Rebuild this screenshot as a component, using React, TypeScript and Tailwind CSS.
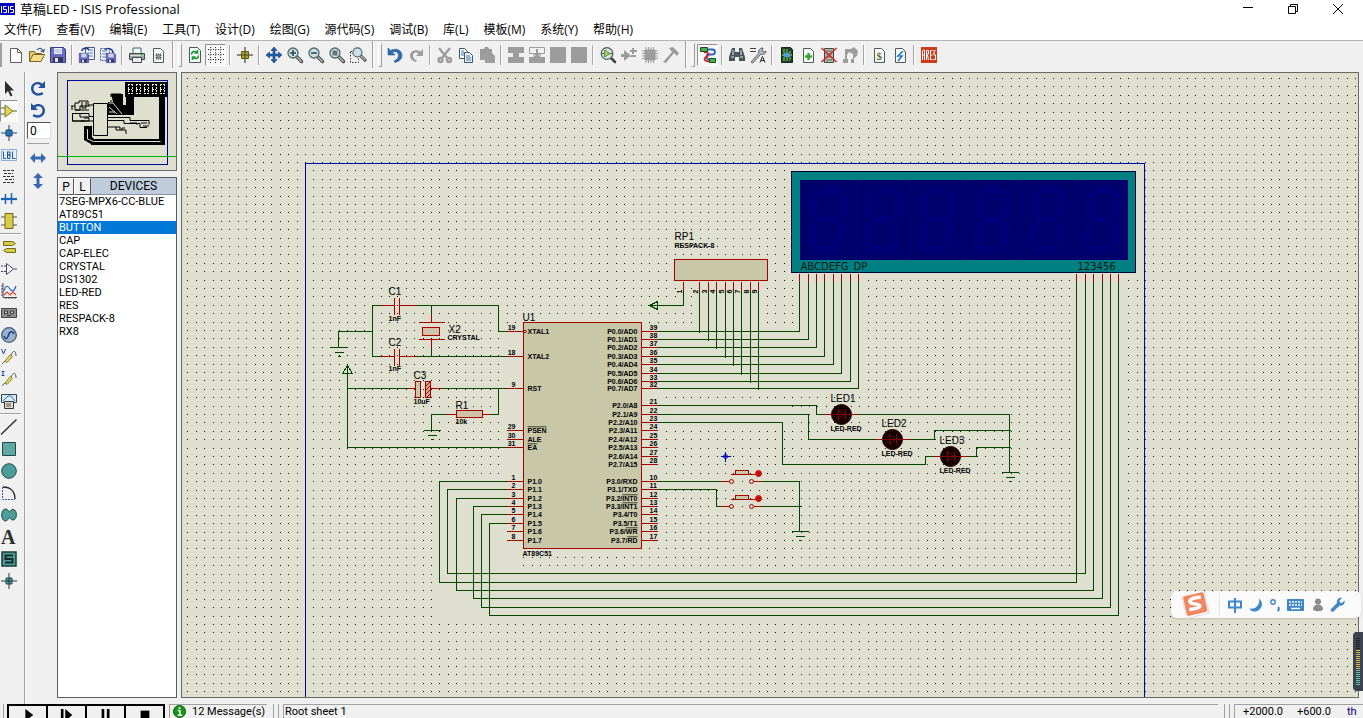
import type { ReactNode } from 'react';

type Tool = { label: string; icon: ReactNode; pressed?: boolean; disabled?: boolean };

const GREY = '#9c9c9c';

const page = (
  <path d="M3.5 1.5h7l3 3v11h-10z" fill="#f6f9f6" stroke="#4c5a5a" />
);

const lens = (
  <>
    <path d="M9.5 9.5l5 5" stroke="#444" strokeWidth="3.4" strokeLinecap="round" />
    <path d="M10 10l4.200 4.200" stroke="#b9b9b9" strokeWidth="1.600" strokeLinecap="round" />
    <circle cx="6" cy="6" r="5" fill="#ccdfe4" stroke="#52666c" strokeWidth="1.300" />
  </>
);

const floppy = (
  <>
    <path d="M.5.500h13l2 2v13h-15z" fill="#6a6cc4" stroke="#3b3b86" />
    <path d="M4 1h8v6H4z" fill="#e8edf8" />
    <path d="M5 3h6M5 5h6" stroke="#9fb0d4" />
    <path d="M3 10h10v5H3z" fill="#33365e" />
    <path d="M5 11h3v4H5z" fill="#e8e8f0" />
  </>
);

const hammerBlock = (
  <path d="M0 0h16v6h-5v4h5v6H0v-6h5V6H0z" fill={GREY} />
);

const chipPins = (
  <path d="M3 3h10v10H3zM4 0v16M6.500 0v16M9 0v16M11.500 0v16M0 4h16M0 6.500h16M0 9h16M0 11.500h16" fill={GREY} stroke={GREY} />
);

const fileTools: Tool[][] = [
  [
    { label: 'New', icon: <path d="M2.500 1.500h7l4 4v10h-11zM9.500 1.500v4h4" fill="#fff" stroke="#5a6060" /> },
    {
      label: 'Open',
      icon: (
        <>
          <path d="M.5 14.500v-10h5l1 2h6v3" fill="#e8c860" stroke="#77652a" />
          <path d="M.5 14.500l3.500-7h11.500l-3.500 7z" fill="#f6dc83" stroke="#77652a" />
          <path d="M8 3c2-2.500 5-2 6 1M15.500 2l-1 3-3-1" fill="none" stroke="#3f5d7c" strokeWidth="1.200" />
        </>
      ),
    },
    { label: 'Save', icon: floppy },
  ],
  [
    {
      label: 'Import section',
      icon: (
        <>
          <path d="M6.500.500h9v12h-9z" fill="#eef2fa" stroke="#46588c" />
          <path d="M9 3h5M9 6h5M9 9h5" stroke="#5a82b8" />
          <g transform="translate(0 6) scale(.62)">{floppy}</g>
          <path d="M3 4c0-3 5-4 7-1" fill="none" stroke="#1d3c8c" strokeWidth="1.600" />
        </>
      ),
    },
    {
      label: 'Export section',
      icon: (
        <>
          <path d="M.5 1.500h9v12h-9z" fill="#eef2fa" stroke="#46588c" strokeDasharray="2 1" />
          <path d="M2 4h5M2 7h5M2 10h4" stroke="#5a82b8" />
          <g transform="translate(6 6) scale(.62)">{floppy}</g>
          <path d="M5 3c3-3 8-1 8 3" fill="none" stroke="#1d3c8c" strokeWidth="1.600" />
        </>
      ),
    },
  ],
  [
    {
      label: 'Print',
      icon: (
        <>
          <path d="M4 1h8v6H4z" fill="#eef8fa" stroke="#4d6266" />
          <path d="M.5 6.500h15v6H.5z" fill="#9aa3a3" stroke="#41494b" />
          <path d="M1 8.500h14" stroke="#d8dede" />
          <path d="M3.500 10.500h9v5h-9z" fill="#e9f0ec" stroke="#41494b" />
          <path d="M12 8h2" stroke="#3db83d" strokeWidth="1.500" />
        </>
      ),
    },
    {
      label: 'Mark output area',
      icon: (
        <>
          {page}
          <path d="M6 7h5v5H6z" fill="#8d9595" stroke="#3c4444" strokeDasharray="1 1" />
        </>
      ),
    },
  ],
];

const viewTools: Tool[][] = [
  [
    {
      label: 'Redraw',
      icon: (
        <>
          <path d="M2.500.500h8l3 3v12h-11z" fill="#f6f9f6" stroke="#4c5a5a" />
          <path d="M4.500 7.500c0-3 3-4 5.500-2M10.500 3v3H7.500M11.500 8.500c0 3-3 4-5.500 2M5.500 13v-3h3" fill="none" stroke="#1d9a3a" strokeWidth="1.600" />
        </>
      ),
    },
    {
      label: 'Grid',
      pressed: true,
      icon: (
        <path d="M0 2.500h16M0 7.500h16M0 12.500h16M2.500 0v16M7.500 0v16M12.500 0v16" stroke="#333" strokeDasharray="1 1.500" />
      ),
    },
  ],
  [
    {
      label: 'Origin',
      icon: (
        <>
          <path d="M8 0v16M0 8h16" stroke="#222" />
          <path d="M4.500 4.500h7v7h-7z" fill="#b0a32c" stroke="#5c5617" />
          <path d="M8 5v6M5 8h6" stroke="#4b4710" />
        </>
      ),
    },
  ],
  [
    {
      label: 'Pan',
      icon: (
        <path d="M8 0l3 3.500H9V7h3.500V5L16 8l-3.500 3V9H9v3.500h2L8 16l-3-3.500h2V9H3.500v2L0 8l3.500-3v2H7V3.500H5z" fill="#1c63b4" stroke="#12356e" strokeWidth=".6" />
      ),
    },
    { label: 'Zoom in', icon: <>{lens}<path d="M3 6h6M6 3v6" stroke="#245" strokeWidth="1.500" /></> },
    { label: 'Zoom out', icon: <>{lens}<path d="M3 6h6" stroke="#245" strokeWidth="1.500" /></> },
    { label: 'Zoom all', icon: <>{lens}<path d="M3.500 3.500h5v5h-5z" fill="#66757a" /></> },
    {
      label: 'Zoom area',
      icon: (
        <>
          <path d="M.5 4.500h8v11h-8z" fill="none" stroke="#333" strokeDasharray="1.500 1.500" />
          <g transform="translate(2 0) scale(.9)">{lens}</g>
        </>
      ),
    },
  ],
];

const editTools: Tool[][] = [
  [
    {
      label: 'Undo',
      icon: <path d="M1 1v7h7L5.500 5.500c3-2 6.500 0 6 3.500-.3 2.300-2 4-4.500 5l1 1.500c4-1 7-3.500 7-7C15 3 9 .500 3.500 3.500z" fill="#2c6fb5" stroke="#17477f" strokeWidth=".5" />,
    },
    {
      label: 'Redo',
      disabled: true,
      icon: <path d="M15 2v7H8l2.500-2.500C7.500 4.500 4.500 6 5 9c.3 2 1.500 3.500 4 4.500l-1 1.500c-3.500-1-6-3-6-6.500C2 4 8 1.500 12.500 4.500z" fill={GREY} />,
    },
  ],
  [
    {
      label: 'Cut',
      disabled: true,
      icon: (
        <g fill="none" stroke={GREY} strokeWidth="2.400">
          <path d="M2 1l9 11M13 1L4 12" />
          <circle cx="3.500" cy="13" r="2" />
          <circle cx="12" cy="13" r="2" />
        </g>
      ),
    },
    {
      label: 'Copy',
      icon: (
        <>
          <path d="M1.500 1.500h5l3 3v7h-8z" fill="#fff" stroke="#43536b" />
          <path d="M6.500 5.500h5l3 3v7h-8z" fill="#eaf2fb" stroke="#43536b" />
          <path d="M3 4h3M3 6h3M3 8h3M8 9h4M8 11h5M8 13h5" stroke="#4577ab" />
        </>
      ),
    },
    { label: 'Paste', disabled: true, icon: <path d="M1 2h4l1-2h3l1 2h3v4l3 3v7H6v-3H1z" fill={GREY} /> },
  ],
  [
    { label: 'Block copy', disabled: true, icon: hammerBlock },
    {
      label: 'Block move',
      disabled: true,
      icon: (
        <>
          <path d="M.5.500h15v6H11v3H5v-3H.5z" fill="none" stroke={GREY} />
          <path d="M7 2h2v4h3l-4 4-4-4h3zM0 10h16v6H0z" fill={GREY} />
        </>
      ),
    },
    { label: 'Block rotate', disabled: true, icon: <path d="M0 0h16v16H0z" fill={GREY} /> },
    { label: 'Block delete', disabled: true, icon: <path d="M0 0h16v16H0z" fill={GREY} /> },
  ],
  [
    {
      label: 'Pick parts',
      icon: (
        <>
          <path d="M10 10l5 5" stroke="#444" strokeWidth="2.600" strokeLinecap="round" />
          <circle cx="7" cy="6.500" r="5.800" fill="#d6e6dd" stroke="#49605b" strokeWidth="1.200" />
          <path d="M1 6.500h3M10 6.500h3" stroke="#49605b" />
          <path d="M4.500 3v7l5.500-3.500z" fill="#a4cf66" stroke="#4a7c2a" strokeWidth=".8" />
        </>
      ),
    },
    { label: 'Make device', disabled: true, icon: <path d="M3 3v11l7-5.500zM0 7h3v3H0zM9 8h6v2H9zM11 1h2v6h-2zM9 3h7v2H9z" fill={GREY} /> },
    { label: 'Packaging tool', disabled: true, icon: chipPins },
    { label: 'Decompose', disabled: true, icon: <path d="M6 1l4-1 6 6-2 3-3-3L3 16l-3-1 9-10z" fill={GREY} /> },
  ],
];

const designTools: Tool[][] = [
  [
    {
      label: 'Wire autorouter',
      pressed: true,
      icon: (
        <>
          <path d="M7 2.500h5c4 0 4 5 0 5H9c-3 0-4 5 1 5" fill="none" stroke="#2a64c8" strokeWidth="1.800" />
          <path d="M4 5c6 0 5 4 2 5-3 2-1 5 4 4" fill="none" stroke="#d22" strokeWidth="1.800" />
          <path d="M.5.500h7v4h-7zM9.500 11.500h6v4h-6z" fill="#43b249" stroke="#14501a" />
        </>
      ),
    },
  ],
  [
    {
      label: 'Search and tag',
      icon: (
        <>
          <path d="M3 1h3v4h4V1h3l3 9v4h-6v-4H6v4H0v-4z" fill="#4a555c" />
          <path d="M2 10h3M11 10h3M4 3v5M12 3v5" stroke="#dde5ea" />
        </>
      ),
    },
    {
      label: 'Property assignment',
      icon: (
        <>
          <path d="M0 1.500h6M0 4.500h6" stroke="#444" />
          <path d="M1 15l8-9c-1-3 1-5 4-5l-1 3 2 1 2-1c0 3-3 4-5 3l-8 9z" fill="#b8bfc4" stroke="#444" strokeWidth=".8" />
          <path d="M10 15.500l2.500-6 2.500 6M11 13.500h3" fill="none" stroke="#222" />
        </>
      ),
    },
  ],
  [
    {
      label: 'Design explorer',
      icon: (
        <>
          <path d="M2.500.500h9l2 2v13h-11z" fill="#1f4326" stroke="#15251a" />
          <path d="M4 3h6M4 5h8M4 11h8M4 13h7" stroke="#8ad86b" strokeDasharray="2 1" />
          <path d="M5 6h6v4H5z" fill="#4aa3d8" />
          <path d="M3 8h2M11 8h2" stroke="#e4dc50" />
        </>
      ),
    },
    { label: 'New sheet', icon: <>{page}<path d="M5 9.500h7M8.500 6v7" stroke="#2fa52f" strokeWidth="2.400" /></> },
    {
      label: 'Remove sheet',
      icon: (
        <>
          <path d="M3.500 1.500h9v14h-9z" fill="#b4bfb2" stroke="#3d463e" />
          <path d="M5 4h6M5 7h6M5 10h6M5 13h6" stroke="#55635a" />
          <path d="M.5 1l15 14M15.500 1L.5 15" stroke="#d42a2a" strokeWidth="1.700" />
        </>
      ),
    },
    {
      label: 'Exit to parent',
      disabled: true,
      icon: <path d="M3 2h6l3-2 4 4-1 5-3 2v5H9v-4h2V7L7 5 5 8v4h1v4H1v-4h2z" fill={GREY} />,
    },
  ],
  [
    {
      label: 'Bill of materials',
      icon: (
        <>
          {page}
          <text x="5.500" y="13" fontSize="11" fontWeight="700" fill="#55743a" fontFamily="Liberation Serif, serif">$</text>
        </>
      ),
    },
    { label: 'Electrical check', icon: <>{page}<path d="M11 4l-5 5h4l-4 5" fill="none" stroke="#1e7cd0" strokeWidth="1.600" /></> },
  ],
  [
    {
      label: 'Netlist to ARES',
      icon: (
        <>
          <path d="M0 0h16v16H0z" fill="#cf3a1c" />
          <path d="M1.500 13V4.500l1-1.500h1v10M1.500 8h2M5.500 13V3.500h2V7h-2M6.500 8l1 5M11.500 3.500h-2v9h2M9.500 8h2M14.500 3.500h-1.500V8h1.500v4.500h-2" fill="none" stroke="#fff" />
        </>
      ),
    },
  ],
];

const probe = (
  <>
    <path d="M1 15l3-3M10 6c2-5 5-5 5 1" fill="none" stroke="#555" />
    <path d="M4 12L9.500 5.500l2 2L6 13.500z" fill="#e7dc4c" stroke="#6c6622" strokeWidth=".8" />
  </>
);

const modeTools: Tool[][] = [
  [
    { label: 'Selection mode', icon: <path d="M4 0v13l3-3 2.500 5.500 2-1L9 9.500h4z" fill="#2d2d2d" /> },
    {
      label: 'Component mode',
      pressed: true,
      icon: <><path d="M0 5h4M0 11h4M12 8h4" stroke="#5e5e24" /><path d="M4 2v12l8-6z" fill="#e3d650" stroke="#7c7424" /></>,
    },
    {
      label: 'Junction dot mode',
      icon: <><path d="M8 0v16M0 8h16" stroke="#1f3c60" /><path d="M5 5h6v6H5z" fill="#2277bb" stroke="#1a4675" /></>,
    },
    {
      label: 'Wire label mode',
      icon: (
        <>
          <path d="M.5 2.500h15v11H.5z" fill="#e5eef8" stroke="#3a6bae" strokeDasharray="1 1" />
          <path d="M2.500 4.500v7H5M6.500 4.500v7h2.500v-3.500H7h2V5H6.500M11.500 4.500v7H14.500" fill="none" stroke="#1c56a5" />
        </>
      ),
    },
    { label: 'Text script mode', icon: <path d="M2 1.500h12M3 4.500h9M2 7.500h12M4 10.500h9M2 13.500h11" stroke="#333" strokeDasharray="3 1" /> },
    { label: 'Buses mode', icon: <><path d="M0 8h16" stroke="#1c63b4" strokeWidth="2.200" /><path d="M4.500 3v10M10.500 2v11" stroke="#1c63b4" strokeWidth="1.500" /></> },
    {
      label: 'Subcircuit mode',
      icon: <><path d="M0 4h16M0 12h16" stroke="#555" /><path d="M4 .500h8v15H4z" fill="#d9cc45" stroke="#70691e" /></>,
    },
  ],
  [
    { label: 'Terminals mode', icon: <path d="M2.500 2.500h9l3 2-3 2h-9zM14.500 9.500h-9l-3 2 3 2h9z" fill="#d9cc45" stroke="#70691e" /> },
    { label: 'Device pins mode', icon: <path d="M5.500 2.500v11l7-5.500zM0 5h2M3 5h2M0 10.500h2M3 10.500h2M13 8h3" fill="#fafafa" stroke="#446" /> },
    {
      label: 'Graph mode',
      icon: (
        <g fill="none">
          <path d="M2 0v14.500h14M0 3h2M0 6h2M0 9h2M0 12h2M5 14v2M8 14v2M11 14v2M14 14v2" stroke="#444" />
          <path d="M3 8c2-7 4-5 6-2s4 3 6-3" stroke="#1c63c4" strokeWidth="1.200" />
          <path d="M3 12l3-3 3 3 3-3 3 3" stroke="#d04030" strokeWidth="1.200" />
        </g>
      ),
    },
    {
      label: 'Tape recorder mode',
      icon: <><path d="M.5 3.500h15v9H.5z" fill="#8d8d8d" stroke="#444" /><path d="M3.500 6h3v2.500h-3zM9.500 6h3v2.500h-3z" fill="#ddd" stroke="#333" /><path d="M6 10.500h4" stroke="#333" /></>,
    },
    {
      label: 'Generator mode',
      icon: <><circle cx="8" cy="8" r="7.300" fill="#98b3ce" stroke="#4a5b74" strokeWidth="1.300" /><path d="M3 9c1 4 3.500 3 4.500-1S12 3.500 13 7" fill="none" stroke="#1d3e83" strokeWidth="1.500" /></>,
    },
    { label: 'Voltage probe mode', icon: <>{probe}<path d="M.5 0l2 5 2-5" fill="none" stroke="#1c48a5" /></> },
    { label: 'Current probe mode', icon: <>{probe}<path d="M.500 .500h3M2 .500v4M.500 4.500h3" fill="none" stroke="#1c48a5" /></> },
    {
      label: 'Virtual instruments mode',
      icon: (
        <>
          <path d="M.5 1.500h15v8H.5z" fill="#dcebf2" stroke="#2e4654" />
          <path d="M2 8l5-5 3 0 4 5" fill="none" stroke="#1c7ab4" />
          <path d="M3.500 8.500h9v7h-9z" fill="#e0dcc8" stroke="#333" />
          <path d="M5 11h5M5 13h5" stroke="#555" />
        </>
      ),
    },
  ],
  [
    { label: '2D line', icon: <path d="M0 15.500L15.500.500" stroke="#333" strokeWidth="1.500" /> },
    { label: '2D box', icon: <path d="M1.500 1.500h13v13h-13z" fill="#5fa9a2" stroke="#21484a" /> },
    { label: '2D circle', icon: <circle cx="8" cy="8" r="7.300" fill="#4c9e98" stroke="#21484a" /> },
    {
      label: '2D arc',
      icon: <><path d="M1.500 2v12.500H14" fill="none" stroke="#2a5fae" strokeDasharray="2 1" /><path d="M2 2c7 0 12 4 12 12" fill="none" stroke="#222" strokeWidth="1.300" /></>,
    },
    { label: '2D path', icon: <path d="M4.500 2C7 2 7 4.500 8.300 4.500S9.500 2.500 12 2.500c4.500 0 4.500 10.500 0 10.500-2.500 0-2.300-2-3.700-2S7 14 4.500 14C-.5 14-.5 2 4.500 2z" fill="#4c9e98" stroke="#21484a" /> },
    {
      label: '2D text',
      icon: <text x="0" y="15" fontSize="20" fontWeight="700" fill="#2e2e2e" fontFamily="Liberation Serif, serif">A</text>,
    },
    {
      label: '2D symbol',
      icon: <><path d="M1 1h14v14H1z" fill="#4c9e98" stroke="#1e3838" strokeWidth="1.500" /><path d="M12 4.500H4.500V8h7v3.500H4" fill="none" stroke="#152a2a" strokeWidth="2" /></>,
    },
    {
      label: '2D marker',
      icon: <><path d="M8 0v16M0 8h16" stroke="#234" /><path d="M5 5h6v6H5z" fill="#4c9e98" stroke="#21484a" /><path d="M8 5v6M5 8h6" stroke="#234" /></>,
    },
  ],
];

const rotateArrow = 'M15 1v7H8l2.600-2.600C7 3 3.500 5 3.500 8.500s4 6.500 8.500 3.500l1.500 2C8 18 1 14.500 1 8.500 1 2.500 8 0 12.500 3.500z';

const menus = ['文件(F)', '查看(V)', '编辑(E)', '工具(T)', '设计(D)', '绘图(G)', '源代码(S)', '调试(B)', '库(L)', '模板(M)', '系统(Y)', '帮助(H)'];

const devices = ['7SEG-MPX6-CC-BLUE', 'AT89C51', 'BUTTON', 'CAP', 'CAP-ELEC', 'CRYSTAL', 'DS1302', 'LED-RED', 'RES', 'RESPACK-8', 'RX8'];

function Glyph({ children }: { children: ReactNode }) {
  return <svg viewBox="0 0 16 16" className="size-4 shrink-0 overflow-visible" aria-hidden="true">{children}</svg>;
}

function ToolButton({ tool, className }: { tool: Tool; className: string }) {
  return (
    <button
      aria-label={tool.label}
      disabled={tool.disabled}
      className={`flex shrink-0 items-center justify-center ${className} ${tool.pressed ? 'border border-t-[#909090] border-l-[#909090] border-r-white border-b-white bg-[#f8f8f8]' : ''}`}
    >
      <Glyph>{tool.icon}</Glyph>
    </button>
  );
}

function Toolbar({ groups }: { groups: Tool[][] }) {
  return (
    <div className="flex items-center">
      {groups.map((group, i) => (
        <div key={i} className="flex items-center">
          {i > 0 && <div className="mx-[3px] h-5 w-0.5 border-r border-white bg-[#a5a5a5]" />}
          {group.map((tool) => <ToolButton key={tool.label} tool={tool} className="h-[22px] w-[21px]" />)}
        </div>
      ))}
    </div>
  );
}

function Grip() {
  return (
    <div className="flex h-full w-4 shrink-0 items-center gap-1 pl-1">
      <div className="h-full w-0.5 border-r border-white bg-[#a0a0a0]" />
      <div className="h-6 w-1 border border-t-white border-l-white border-r-[#a0a0a0] border-b-[#a0a0a0]" />
    </div>
  );
}

/* ---------- schematic ---------- */

const PAPER = '#dedfcf';
const WIRE = '#004600';
const PIN = '#a80000';
const BODY = '#c8c8a8';

const port0 = [331, 339, 347, 356, 364, 373, 381, 388];
const port2 = [405, 414, 422, 430, 439, 447, 456, 464];
const port1 = [481, 489, 498, 506, 514, 523, 531, 540];
const segmentX = [799, 808, 816, 824, 833, 841, 850, 858];
const packX = [699, 708, 716, 725, 733, 741, 750, 758];

const digitRuns = [
  { x: 439, y: 481, bottom: 582, right: 1076 },
  { x: 447, y: 489, bottom: 573, right: 1085 },
  { x: 456, y: 498, bottom: 590, right: 1093 },
  { x: 473, y: 506, bottom: 598, right: 1102 },
  { x: 481, y: 514, bottom: 607, right: 1110 },
  { x: 489, y: 523, bottom: 615, right: 1118 },
];

const leftPins = [
  { y: 331, no: 19, name: 'XTAL1' },
  { y: 356, no: 18, name: 'XTAL2' },
  { y: 388, no: 9, name: 'RST' },
  { y: 430, no: 29, name: 'PSEN', bar: true },
  { y: 439, no: 30, name: 'ALE' },
  { y: 447, no: 31, name: 'EA', bar: true },
  ...port1.map((y, i) => ({ y, no: i + 1, name: `P1.${i}`, bar: false })),
];

const port3Names = [['RXD'], ['TXD'], ['INT0', 'bar'], ['INT1', 'bar'], ['T0'], ['T1'], ['WR', 'bar'], ['RD', 'bar']];

const rightPins = [
  ...port0.map((y, i) => ({ y, no: 39 - i, name: `P0.${i}/`, alt: `AD${i}`, bar: false })),
  ...port2.map((y, i) => ({ y, no: 21 + i, name: `P2.${i}/`, alt: `A${8 + i}`, bar: false })),
  ...port1.map((y, i) => ({ y, no: 10 + i, name: `P3.${i}/`, alt: port3Names[i][0], bar: port3Names[i].length > 1 })),
];

const leds = [
  { name: 'LED1', x: 841, y: 414 },
  { name: 'LED2', x: 892, y: 439 },
  { name: 'LED3', x: 950, y: 456 },
];

// areas where the dot grid is hidden behind dense wiring
const clearAreas = [
  [660, 329, 200, 62],
  [695, 281, 66, 50],
  [797, 273, 63, 60],
  [786, 165, 357, 110],
  [1075, 273, 45, 344],
  [438, 571, 682, 46],
  [438, 479, 84, 92],
  [658, 403, 130, 21],
  [644, 325, 15, 218],
  [506, 325, 14, 218],
];

function Ground({ x, y }: { x: number; y: number }) {
  return <path d={`M${x - 8} ${y}h17M${x - 4} ${y + 5}h9M${x - 1} ${y + 9}h3`} stroke={WIRE} />;
}

function Display() {
  return (
    <g>
      <rect x="791" y="171" width="344" height="101" fill="#008080" stroke="#00003c" />
      <rect x="799" y="179" width="328" height="80" fill="#00006c" />
      {[0, 1, 2, 3, 4, 5].map((i) => (
        <g key={i} transform={`translate(${812 + i * 55} 190)`} stroke="#000078" strokeWidth="6" fill="none" shapeRendering="auto">
          <path d="M6 0h22M4 29h22M2 58h22" />
          <path d="M3 3L1 26M31 3L29 26M1 32L-1 55M29 32L27 55" />
          {i > 0 && <path d="M-11 -10v78" strokeWidth="1" />}
        </g>
      ))}
      <g fontFamily="DejaVu Sans, sans-serif" fontSize="10" fill="#001a1a">
        <text x="800" y="269">ABCDEFG</text>
        <text x="853" y="269">DP</text>
        <text x="1077" y="269">123456</text>
      </g>
      {[...segmentX, ...digitRuns.map((d) => d.right)].map((x) => (
        <path key={x} d={`M${x} 273v8`} stroke={PIN} />
      ))}
    </g>
  );
}

function Switch({ y }: { y: number }) {
  return (
    <g fill="none" stroke={PIN}>
      <path d={`M720 ${y}h9M753 ${y}h8M730 ${y - 7}h24`} />
      <path d={`M735 ${y - 11}h13v4h-13z`} fill={BODY} />
      <circle cx="731" cy={y} r="2" fill={PAPER} shapeRendering="auto" />
      <circle cx="751" cy={y} r="2" fill={PAPER} shapeRendering="auto" />
      <circle cx="758" cy={y - 8} r="3" fill="#e01010" stroke="#c81010" shapeRendering="auto" />
      <path d={`M758 ${y - 10}v4M756 ${y - 8}h4`} stroke="#a00000" />
    </g>
  );
}

function Schematic() {
  return (
    <svg className="block size-full" role="img" aria-label="Schematic" shapeRendering="crispEdges">
      <defs>
        <pattern id="dots" x="543" y="383" width="42" height="42" patternUnits="userSpaceOnUse">
          {[0, 8, 17, 25, 34].map((y) => [0, 8, 17, 25, 34].map((x) => (
            <rect key={`${x}-${y}`} x={x} y={y} width="1" height="1" fill="#111" />
          )))}
        </pattern>
      </defs>
      <rect width="100%" height="100%" fill={PAPER} />
      <rect width="100%" height="100%" fill="url(#dots)" />
      <g transform="translate(-181.5 -72.5)" fill="none" fontFamily="Liberation Sans, sans-serif">
        {clearAreas.map(([x, y, w, h]) => (
          <rect key={`${x}-${y}`} x={x} y={y} width={w} height={h} fill={PAPER} />
        ))}
        <rect x="305" y="163" width="839" height="587" stroke="#0000b0" />

        <g stroke={WIRE}>
          {port0.map((y, i) => (
            <path key={y} d={`M657 ${y}H${segmentX[i]}V281M${packX[i]} 290V${y + 1}`} />
          ))}
          <path d="M683 290v15h-26M657 301v8l-8-4zM649 305h8" />
          {digitRuns.map((d) => (
            <path key={d.x} d={`M506 ${d.y}H${d.x}V${d.bottom}H${d.right}V281`} />
          ))}
          <path d="M380 305h-8v51h8M372 331h-34v16M415 305h83v26h8M415 356h91M431 305v9M431 347v9" />
          <path d="M347 373v74h159M347 388h59M441 388h65M498 388v26h-8M446 414h-15v16" />
          <path d="M347 365l-5 8h10zM347 365v8" />
          <path d="M657 405h159v9h8M858 414h151v58M657 414h151v25h67M909 439h25v-9h76M657 422h125v42h143v-8h8M967 456h9v-9h34" />
          <path d="M657 481h63M761 481h38v50M657 489h59v17h4M761 506h39" />
        </g>
        <Ground x={338} y={347} />
        <Ground x={431} y={430} />
        <Ground x={799} y={531} />
        <Ground x={1009} y={472} />

        <g stroke={PIN}>
          <path d="M380 305h14M399 305h16M394 297v17M399 297v17" />
          <path d="M380 356h14M399 356h16M394 348v17M399 348v17" />
          <path d="M431 314v8M431 339v8M418 322h26M418 339h26" />
          <rect x="422" y="327" width="17" height="8" fill="#d0c4a8" />
          <path d="M406 388h9M430 388h11" />
          <rect x="415" y="381" width="5" height="16" fill={BODY} />
          <rect x="425" y="381" width="5" height="16" fill="#d8a890" />
          <path d="M425 386l5-5M425 390l5-5M425 394l5-5M426 397l4-4" />
          <path d="M446 414h10M482 414h8" />
          <rect x="456" y="410" width="26" height="7" fill="#d0c4a8" />
          <rect x="674" y="259" width="93" height="21" fill={BODY} />
          {[683, ...packX].map((x) => <path key={x} d={`M${x} 281v9`} />)}
          <rect x="523" y="322" width="118" height="226" fill={BODY} />
          <path d="M523 329l3 2-3 2" />
          {leftPins.map((p) => <path key={p.y} d={`M506 ${p.y}h17`} />)}
          {rightPins.map((p) => <path key={p.y} d={`M641 ${p.y}h16`} />)}
        </g>

        <g fontSize="7" fontWeight="700" fill="#000">
          {leftPins.map((p) => (
            <g key={p.y}>
              <text x="515" y={p.y - 2} textAnchor="end">{p.no}</text>
              <text x="527" y={p.y + 2} className={p.bar ? 'overline' : ''}>{p.name}</text>
            </g>
          ))}
          {rightPins.map((p) => (
            <g key={p.y}>
              <text x="649" y={p.y - 2}>{p.no}</text>
              <text x="637" y={p.y + 2} textAnchor="end">
                {p.name}<tspan className={p.bar ? 'overline' : ''}>{p.alt}</tspan>
              </text>
            </g>
          ))}
          {[683, ...packX].map((x, i) => (
            <text key={x} transform={`translate(${x - 2} 293) rotate(-90)`}>{i + 1}</text>
          ))}
          <text x="522" y="555">AT89C51</text>
          <text x="674" y="247">RESPACK-8</text>
          <text x="388" y="320">1nF</text>
          <text x="388" y="370">1nF</text>
          <text x="447" y="339">CRYSTAL</text>
          <text x="413" y="403">10uF</text>
          <text x="455" y="423">10k</text>
          {leds.map((led) => <text key={led.name} x={led.x - 11} y={led.y + 16}>LED-RED</text>)}
        </g>
        <g fontSize="10" fill="#000">
          <text x="522" y="320">U1</text>
          <text x="674" y="239">RP1</text>
          <text x="388" y="294">C1</text>
          <text x="388" y="345">C2</text>
          <text x="448" y="332">X2</text>
          <text x="413" y="378">C3</text>
          <text x="455" y="408">R1</text>
          {leds.map((led) => <text key={led.name} x={led.x - 11} y={led.y - 13}>{led.name}</text>)}
        </g>

        {leds.map((led) => (
          <g key={led.name} transform={`translate(${led.x} ${led.y})`} stroke={PIN}>
            <path d="M-17 0h34" />
            <circle r="10" fill="#140000" stroke="#2c0000" shapeRendering="auto" />
            <path d="M-10 0h20M-3 -5v10l6 -5zM4 -5v10" stroke="#7a0808" shapeRendering="auto" />
          </g>
        ))}
        <Switch y={481} />
        <Switch y={506} />
        <Display />
        <g stroke="#0000b4">
          <path d="M720 456h10M725 451v10" />
          <circle cx="725" cy="456" r="2" shapeRendering="auto" />
        </g>
      </g>
    </svg>
  );
}

function Overview() {
  return (
    <svg viewBox="0 0 118 97" className="block w-full" role="img" aria-label="Overview">
      <rect width="118" height="97" fill={PAPER} />
      <rect x="9.500" y="7.500" width="100" height="84" fill="none" stroke="#0000a0" />
      <rect y="83" width="118" height="1" fill="#00b400" />
      <g fill="none" stroke="#000">
        <path d="M35.500 30.500h14v32h-14z" />
        <path d="M13 33h4v-3h4v-2h9v4h5M17 33v4h5v-4h10M24 29v6h4v-6M17 37h14M14 33v4M14 40.500h17v3h4M14.500 40v8h12M22 40v4h9M26 45h5v3h-8M14 48h21" />
        <path d="M50 30h3v-3M50 47.500h16v3h16v4h7M50 44.500h22v3h19v4M72 50h7v2M83 50h6M85 53h6M50 54h12v3h6v4M58 54v3h4M64 57v-2h3" />
        <path d="M53 24v-3h10v3" />
      </g>
      <path d="M67 9h42v15H67z" fill="#000" />
      {[0, 1, 2, 3, 4].map((i) => (
        <path key={i} transform={`translate(${70 + i * 8} 11)`} d="M0 .500h4M0 5.500h4M0 9.500h4M.5 0v10M4.500 0v10" stroke="#e8e8d8" strokeDasharray="2 1" fill="none" />
      ))}
      <path d="M53 21h12v11h3v-8h8v18H50v-13h5zM101 24h6v48H33v-1l-7-4V53h8v11l2 2h65z" fill="#000" />
      <path d="M29.500 56v10l6 2.500h67" stroke={PAPER} fill="none" />
      <path d="M51 30h4l9 11M51 34l8 7M51 39h6" stroke={PAPER} fill="none" />
    </svg>
  );
}

function InputMethodBar() {
  return (
    <div className="absolute right-0.5 bottom-[100px] flex h-[27px] w-[190px] items-center rounded-md bg-[#fafafa] shadow">
      <svg viewBox="0 0 30 28" className="ml-2.5 h-7 w-[30px]" aria-hidden="true">
        <g transform="rotate(-13 15 14)">
          <path d="M3 3h23v22H3z" fill="#fff" stroke="#ddd" />
          <rect x="4" y="3" width="21" height="20" rx="2" fill="#f08660" />
          <path d="M21.500 7.500c-12-2.500-15 2.500-8 5s8 6-6 4.500" fill="none" stroke="#fff" strokeWidth="3.500" />
        </g>
      </svg>
      <div className="ml-2 h-6 w-0.5 border-r border-white bg-[#eadede]" />
      <div className="ml-1.5 flex items-center gap-1.5 text-[#3f86c8]">
        <button aria-label="Chinese">
          <svg viewBox="0 0 16 16" className="size-4" fill="none" stroke="currentColor" strokeWidth="2"><path d="M2 4.500h12v6H2zM8 1v15" /></svg>
        </button>
        <button aria-label="Half width">
          <svg viewBox="0 0 14 16" className="h-4 w-3.5" fill="currentColor"><path d="M10 1.500c6 5 2 13-5 13-2 0-3.500-1-4.500-3 6 1 11-4 9.500-10z" /></svg>
        </button>
        <button aria-label="Punctuation">
          <svg viewBox="0 0 12 16" className="h-4 w-3" fill="none" stroke="currentColor"><circle cx="4" cy="5" r="2.200" strokeWidth="1.400" /><path d="M9 10c1.500 1 1 3-.5 4" strokeWidth="2" /></svg>
        </button>
        <button aria-label="Soft keyboard">
          <svg viewBox="0 0 18 16" className="h-4 w-[18px]"><rect x="0" y="2" width="17" height="12" rx="1" fill="currentColor" /><path d="M2 5h13M2 8h13" stroke="#fff" strokeWidth="1.500" strokeDasharray="2 1" /><path d="M4 11.500h9" stroke="#fff" strokeWidth="1.500" /></svg>
        </button>
        <button aria-label="Account" className="text-[#8c8c8c]">
          <svg viewBox="0 0 13 16" className="h-4 w-[13px]" fill="currentColor"><circle cx="7" cy="4.500" r="3" /><path d="M2 12c0-6 10-6 10 0 0 3-10 3-10 0z" /></svg>
        </button>
        <button aria-label="Tools">
          <svg viewBox="0 0 16 16" className="size-4" fill="currentColor"><path d="M1 12l6-6c-1-3 2-6 5-5L9.500 3.500l.5 2 2 .500L14.500 3.500c1 3-2 6-5 5l-6 6c-2 1-3.500-1-2.500-2.500z" /></svg>
        </button>
      </div>
    </div>
  );
}

const simButtons = [
  { label: 'Play', d: 'M5 1v14l9-7z' },
  { label: 'Step', d: 'M1 1h3v14H1zM6 1v14l8-7z' },
  { label: 'Pause', d: 'M3 1h3v14H3zM9 1h3v14H9z' },
  { label: 'Stop', d: 'M3 3h10v12H3z' },
];

export default function App() {
  return (
    <div className="relative flex h-screen flex-col overflow-hidden bg-[#f0f0f0] font-['Roboto','Noto_Sans_CJK_SC',sans-serif] text-black">
      <header className="flex h-[18px] shrink-0 items-center bg-white">
        <svg viewBox="0 0 15 12" className="h-3 w-[15px]" aria-hidden="true">
          <path d="M0 0h15v12H0z" fill="#0000c0" />
          <path d="M1.500 3v7M6.500 3.500h-3v3h3v3h-3M8.500 3v7M13.500 3.500h-3v3h3v3h-3" fill="none" stroke="#fff" />
        </svg>
        <h1 className="ml-[5px] flex-1 font-['Open_Sans','Noto_Sans_CJK_SC',sans-serif] text-[13px] leading-[18px]">草稿LED - ISIS Professional</h1>
        <div className="flex gap-[35px] pr-5">
          <button aria-label="Minimize"><svg viewBox="0 0 10 10" className="size-2.5" stroke="#000"><path d="M0 3.500h10" /></svg></button>
          <button aria-label="Restore"><svg viewBox="0 0 10 10" className="size-2.5" fill="none" stroke="#000"><path d="M.5 2.500h7v7h-7zM2.500 2V.500h7v7H8" /></svg></button>
          <button aria-label="Close"><svg viewBox="0 0 10 10" className="size-2.5" stroke="#000"><path d="M0 0l10 10M10 0L0 10" /></svg></button>
        </div>
      </header>

      <nav className="flex h-[22px] shrink-0 items-center gap-[15px] bg-white pt-0.5 pl-1 font-['Open_Sans','Noto_Sans_CJK_SC',sans-serif] text-xs leading-5">
        {menus.map((menu) => <button key={menu} className="whitespace-nowrap">{menu}</button>)}
      </nav>

      <div className="flex h-8 shrink-0 items-center border-t border-[#b4b4b4] pb-1">
        <div className="mr-[3px] h-6 w-0.5 bg-[#a0a0a0]" />
        <Toolbar groups={fileTools} />
        <Grip />
        <Toolbar groups={viewTools} />
        <Grip />
        <Toolbar groups={editTools} />
        <Grip />
        <Toolbar groups={designTools} />
      </div>

      <main className="flex min-h-0 flex-1">
        <div className="flex w-[25px] shrink-0 flex-col border-r border-[#a0a0a0] pt-1.5">
          {modeTools.map((group, i) => (
            <div key={i}>
              {i > 0 && <hr className="my-px mr-[3px] h-0.5 border-t border-b border-t-[#a0a0a0] border-b-white" />}
              {group.map((tool) => <ToolButton key={tool.label} tool={tool} className="h-[22px] w-[18px]" />)}
            </div>
          ))}
        </div>

        <div className="flex w-8 shrink-0 flex-col items-start border-l border-white pt-[5px] pl-px">
          <ToolButton className="h-[22px] w-[22px]" tool={{ label: 'Rotate clockwise', icon: <path d={rotateArrow} fill="#24539e" /> }} />
          <ToolButton className="h-[22px] w-[22px]" tool={{ label: 'Rotate anti-clockwise', icon: <g transform="translate(16 0) scale(-1 1)"><path d={rotateArrow} fill="#24539e" /></g> }} />
          <input
            aria-label="Rotation angle"
            defaultValue="0"
            className="mt-px h-[17px] w-6 border border-t-[#555] border-l-[#555] border-r-[#e0e0e0] border-b-[#e0e0e0] bg-white px-0.5 text-xs leading-none"
          />
          <hr className="mt-1 w-[22px] border-[#a0a0a0]" />
          <ToolButton className="mt-0.5 h-[24px] w-[22px]" tool={{ label: 'Mirror horizontal', icon: <path d="M0 8l5-5v3.500h6V3l5 5-5 5V9.500H5V13z" fill="#3768ae" /> }} />
          <ToolButton className="h-[22px] w-[22px]" tool={{ label: 'Mirror vertical', icon: <path d="M8 0l5 5H9.500v6H13l-5 5-5-5h3.500V5H3z" fill="#3768ae" /> }} />
        </div>

        <aside className="flex w-[120px] shrink-0 flex-col pb-5">
          <div className="border border-[#6a6a72]"><Overview /></div>
          <section className="mt-1.5 flex min-h-0 flex-1 flex-col border border-[#5a5a62] bg-white">
            <div className="flex h-[17px] shrink-0 items-stretch bg-[#bfccdc] text-xs leading-4">
              <button className="w-4 border border-t-white border-l-white border-r-[#555] border-b-[#555] bg-[#f0f0f0]">P</button>
              <button className="w-[17px] border border-t-white border-l-white border-r-[#555] border-b-[#555] bg-[#f0f0f0]">L</button>
              <h2 className="flex-1 border-b border-[#8a94a2] text-center">DEVICES</h2>
            </div>
            <ul className="text-[11px] leading-[13px]">
              {devices.map((name) => (
                <li key={name} className={`px-px whitespace-nowrap ${name === 'BUTTON' ? 'bg-[#0078d7] text-white' : ''}`}>{name}</li>
              ))}
            </ul>
          </section>
        </aside>

        <div className="mr-1 mb-5 ml-1 min-w-0 flex-1 border border-[#6a6a62]">
          <Schematic />
        </div>
      </main>

      <footer className="absolute inset-x-0 bottom-0 flex h-[14px] text-[11px] leading-[13px]">
        <div className="ml-[3px] w-1 border-l border-[#a0a0a0]" />
        <div className="flex h-5 border-t-2 border-l-2 border-black">
          {simButtons.map((b) => (
            <button key={b.label} aria-label={b.label} className="flex w-[39px] justify-center border-r-2 border-black bg-[#f0f0f0] pt-0.5">
              <svg viewBox="0 0 16 16" className="h-3.5 w-4"><path d={b.d} /></svg>
            </button>
          ))}
        </div>
        <div className="ml-1 flex w-[98px] shrink-0 items-start border-t border-l border-[#a0a0a0] pl-[3px]">
          <svg viewBox="0 0 14 14" className="mr-1.5 size-[13px] shrink-0" aria-hidden="true">
            <circle cx="7" cy="7" r="6.500" fill="#159415" stroke="#075807" />
            <path d="M5 6h2.500v5M5 11h5" stroke="#fff" strokeWidth="1.500" fill="none" />
            <circle cx="7" cy="3.500" r="1.200" fill="#fff" />
          </svg>
          <span className="whitespace-nowrap">12 Message(s)</span>
        </div>
        <div className="ml-1.5 w-1.5 border-x border-[#a0a0a0]" />
        <div className="ml-1 flex-1 border-t border-l border-[#a0a0a0] pl-px">Root sheet 1</div>
        <div className="ml-1.5 w-1.5 border-x border-[#a0a0a0]" />
        <div className="ml-1 flex w-[129px] border-t border-l border-[#a0a0a0] pl-2">
          <span className="w-[54px]">+2000.0</span>
          <span className="w-[50px]">+600.0</span>
          <span className="text-[#000080]">th</span>
        </div>
      </footer>

      <InputMethodBar />
      <div className="absolute right-0 bottom-[27px] flex h-[59px] w-2.5 justify-center rounded-l bg-[#3c424e]">
        <svg viewBox="0 0 4 48" className="mt-1.5 h-12 w-1" aria-hidden="true">
          <path d="M2 0v11" stroke="#20242c" strokeWidth="4" strokeDasharray="1 1" />
          <path d="M2 12v20" stroke="#d8bc50" strokeWidth="4" strokeDasharray="1 1" />
          <path d="M2 32v16" stroke="#5cc8b4" strokeWidth="4" strokeDasharray="1 1" />
        </svg>
      </div>
    </div>
  );
}
